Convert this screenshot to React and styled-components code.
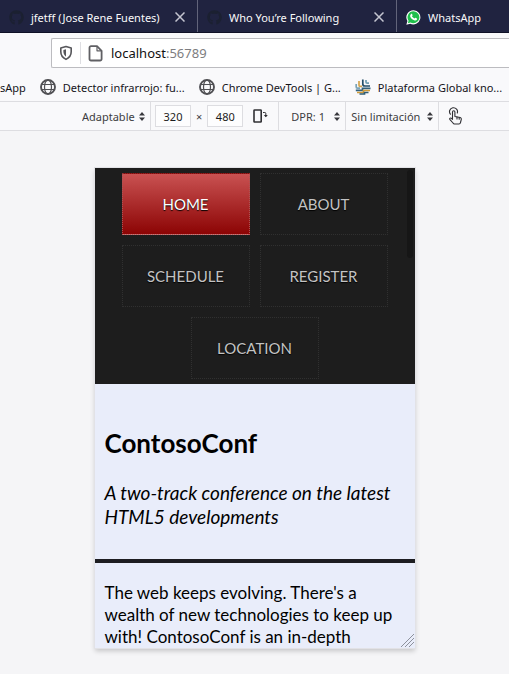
import React from "react";
import styled, { createGlobalStyle, css } from "styled-components";
import { FaGithub } from "react-icons/fa";

const uiFont = `"Noto Sans", "Open Sans", sans-serif`;

const GlobalStyle = createGlobalStyle`
  *, *::before, *::after { box-sizing: border-box; }
  body { margin: 0; background: #f5f5f7; font-family: ${uiFont}; overflow-x: hidden; }
  h1, p { margin: 0; padding: 0; }
  button, input, select { font: inherit; color: inherit; margin: 0; }
`;

const Window = styled.div`
  min-height: 100vh;
  overflow: hidden;
`;

const TabBar = styled.div`
  display: flex;
  height: 33px;
  background: #202340;
  border-bottom: 1px solid #0f1126;
  overflow: hidden;
`;

const Tab = styled.div`
  flex: 0 0 199px;
  min-width: 0;
  display: flex;
  align-items: center;
  gap: 7px;
  padding: 2px 12px 0 9px;
  border-right: 1px solid #62647a;
  color: #f9f9fa;
  font-size: 11px;
  white-space: nowrap;
  &:first-child { flex-basis: 198px; }
`;

const Favicon = styled.span`
  display: flex;
  flex: none;
  justify-content: center;
  width: 15px;
  color: #1b2031;
`;

const TabTitle = styled.span`
  flex: 1;
`;

const CloseButton = styled.button`
  display: flex;
  padding: 0;
  border: 0;
  background: none;
  color: #c4c5d0;
`;

const AddressRow = styled.div`
  display: flex;
  height: 39px;
  padding: 5px 0 4px 51px;
  background: #f9f9fb;
`;

const AddressBox = styled.div`
  flex: 1;
  display: flex;
  align-items: center;
  border: 1px solid #bcbcc0;
  border-right: 0;
  border-radius: 2px 0 0 2px;
  background: #fff;
`;

const ShieldSlot = styled.span`
  display: flex;
  align-items: center;
  width: 29px;
  height: 22px;
  padding-left: 7px;
  border-right: 1px solid #dedee2;
`;

const PageSlot = styled.span`
  display: flex;
  padding: 0 8px 0 7px;
`;

const Address = styled.div`
  font-size: 13px;
  color: #111;
  span { color: #7d7d80; }
`;

const Bookmarks = styled.nav`
  display: flex;
  align-items: center;
  gap: 14px;
  height: 29px;
  padding-top: 1px;
  background: #f9f9fb;
  overflow: hidden;
`;

const Bookmark = styled.a`
  flex: none;
  display: flex;
  align-items: center;
  gap: 7px;
  color: #15141a;
  font-size: 11px;
  white-space: nowrap;
  text-decoration: none;
`;

const DeviceBar = styled.div`
  display: flex;
  align-items: center;
  height: 30px;
  padding-left: 82px;
  border: solid #dddde1;
  border-width: 1px 0;
  background: #f9f9fb;
  color: #3d3d41;
  font-size: 11px;
`;

const cellStyles = {
  device: css`width: 69px;`,
  rotate: css`width: 36px; padding-left: 10px;`,
  dpr: css`width: 67px; padding-left: 12px;`,
  throttle: css`width: 93px; padding-left: 5px;`,
};

const Cell = styled.div`
  display: flex;
  flex: none;
  align-items: center;
  height: 100%;
  border-right: 1px solid #dddde1;
  ${({ $kind }) => cellStyles[$kind]}
`;

const Select = styled.select`
  flex: 1;
  min-width: 0;
  appearance: none;
  padding: 0;
  border: 0;
  background: none;
`;

const Arrows = styled.svg`
  flex: none;
  margin-right: 5px;
`;

const SizeInput = styled.input`
  width: 36px;
  height: 22px;
  padding: 0;
  border: 1px solid #dddde1;
  background: #fdfdfe;
  text-align: center;
  color: #1c1c20;
`;

const Sizes = styled.div`
  display: flex;
  flex: none;
  align-items: center;
  gap: 5px;
  padding-left: 4px;
`;

const IconButton = styled.button`
  display: flex;
  padding: 0;
  border: 0;
  background: none;
  color: #303034;
`;

const TouchButton = styled(IconButton)`
  margin-left: 9px;
`;

const Stage = styled.main`
  display: flex;
  justify-content: center;
  padding: 37px 16px 24px;
`;

const Viewport = styled.section`
  position: relative;
  flex: 0 1 320px;
  height: 480px;
  overflow: hidden;
  background: #e9edfa;
  box-shadow: 0 0 0 1px #e2e2e6, 0 3px 5px rgba(0, 0, 0, 0.2);
  font-family: Lato, "Liberation Sans", sans-serif;
  color: #000;
`;

const SiteNav = styled.nav`
  display: flex;
  flex-wrap: wrap;
  justify-content: center;
  background: #1d1d1d;
`;

const SiteLink = styled.a`
  display: flex;
  align-items: center;
  justify-content: center;
  width: 128px;
  height: 62px;
  margin: 5px;
  border: 1px dotted #303030;
  color: #c3c3c3;
  font-size: 15px;
  text-decoration: none;
  text-shadow: 0 1px 1px #000;
  ${({ $active }) =>
    $active &&
    css`
      border-color: #7d2a2a #a55 #b98080;
      background: linear-gradient(#c95252, #8c0404);
      color: #fff;
    `}
`;

const Thumb = styled.span`
  position: absolute;
  top: 2px;
  right: 2px;
  width: 6px;
  height: 88px;
  border-radius: 3px;
  background: #161616;
`;

const Grip = styled.svg`
  position: absolute;
  right: 1px;
  bottom: 1px;
`;

const Hero = styled.header`
  padding: 41px 10px 30px;
  border-bottom: 4px solid #1d1d21;
`;

const Title = styled.h1`
  margin-bottom: 20px;
  font-size: 26px;
  line-height: 36px;
`;

const Tagline = styled.p`
  font-size: 19px;
  line-height: 24px;
  font-style: italic;
`;

const Intro = styled.p`
  padding: 19px 10px;
  font-size: 17px;
  line-height: 22px;
`;

function CloseIcon() {
  return (
    <svg width="10" height="10" viewBox="0 0 10 10" fill="none" stroke="currentColor" strokeWidth="1.5">
      <path d="M0.5 0.5 9.5 9.5M9.5 0.5 0.5 9.5" />
    </svg>
  );
}

function WhatsAppIcon() {
  return (
    <svg width="17" height="17" viewBox="0 0 17 17">
      <path d="M8.6.2a8.1 8.1 0 0 0-7 12.3L.4 16.7l4.3-1.1A8.1 8.1 0 1 0 8.6.2Z" fill="#fff" />
      <path d="M8.6 1.5a6.8 6.8 0 0 0-5.7 10.6l-.8 2.8 2.9-.7A6.8 6.8 0 1 0 8.6 1.5Z" fill="#1fc04c" />
      <path d="M5.8 4.4c.4-.3.9-.3 1.1.2l.5 1.3c.1.4-.2.7-.6 1.2.7 1.3 1.6 2 2.9 2.5.5-.5.7-1 1.2-.8l1.4.7c.4.2.3.8.1 1.3-.4.9-1.5 1.2-2.4 1-2.9-.7-5-2.9-5.3-4.8-.1-.9.4-2 1.1-2.6Z" fill="#fff" />
    </svg>
  );
}

function ShieldIcon() {
  return (
    <svg width="14" height="16" viewBox="0 0 14 16" fill="none" stroke="#57575b" strokeWidth="1.6">
      <path d="M7 1.6 12.2 3v3.8c0 3.4-1.8 6-5.2 7.6-3.4-1.6-5.2-4.2-5.2-7.6V3Z" strokeLinejoin="round" />
      <path d="M7 4.3V11.7C5.2 10.4 4.4 8.7 4.4 6.6V5Z" fill="#57575b" stroke="none" />
    </svg>
  );
}

function PageIcon() {
  return (
    <svg width="15" height="17" viewBox="0 0 15 17" fill="none" stroke="#606064" strokeWidth="1.8" strokeLinejoin="round">
      <path d="M3 1.2H9L13.6 5.8V14a1.5 1.5 0 0 1-1.5 1.5H3A1.5 1.5 0 0 1 1.5 14V2.7A1.5 1.5 0 0 1 3 1.2Z" />
      <path d="M9 1.5V5.8H13.5" strokeWidth="1.2" />
    </svg>
  );
}

function GlobeIcon() {
  return (
    <svg width="16" height="16" viewBox="0 0 16 16" fill="none" stroke="#505054" strokeWidth="1.2">
      <circle cx="8" cy="8" r="7" strokeWidth="1.9" />
      <ellipse cx="8" cy="8" rx="3.5" ry="7" />
      <path d="M1.5 5.5H14.5M1.5 10.5H14.5" />
    </svg>
  );
}

function PlatformIcon() {
  return (
    <svg width="16" height="16" viewBox="0 0 16 16" fill="none" strokeWidth="1.7">
      <path d="M1.2 5v3q0 1.2 1.2 1.2H5" stroke="#7ba3b5" />
      <path d="M4 2V6.2q0 1.2 1.2 1.2H7" stroke="#d5a44a" />
      <path d="M7.8 .5V5q0 2 2 2H15" stroke="#234f69" />
      <path d="M11 1V3q0 1.2 1.2 1.2H14" stroke="#6d9db1" />
      <path d="M.8 11.3H7.5V9.3H15.5" stroke="#31617c" />
      <path d="M2 13.5H8.5V11.5H15" stroke="#d09b3a" />
      <path d="M4.5 15H9.5V13.5H13.5" stroke="#305d75" />
    </svg>
  );
}

function UpDown() {
  return (
    <Arrows width="6" height="9" viewBox="0 0 6 9" fill="#38383d">
      <path d="M3 0 6 3.5H0ZM3 9 0 5.5H6Z" />
    </Arrows>
  );
}

function RotateIcon() {
  return (
    <svg width="16" height="16" viewBox="0 0 16 16" fill="none" stroke="currentColor" strokeWidth="1.6">
      <rect x="1" y="2" width="7.2" height="12" rx="0.6" />
      <path d="M10 4.5H11.8Q12.8 4.5 12.8 5.5V8.500" strokeWidth="1" />
      <path d="M10.8 7H14.8L12.8 9.300Z" fill="currentColor" stroke="none" />
    </svg>
  );
}

function TouchIcon() {
  return (
    <svg width="15" height="18" viewBox="0 0 15 18" fill="none" stroke="currentColor" strokeWidth="1.1" strokeLinecap="round" strokeLinejoin="round">
      <path d="M2.4 7.2A4 4 0 1 1 9.3 6" />
      <path d="M4.5 11.5V5a1.2 1.2 0 0 1 2.4 0V9.5L12.2 10.5Q13.6 10.9 13.3 12.3L12.5 15.5Q12.2 17 11 17H6.5Q5.5 17 5 16L2 12.7Q1.2 11.7 2.1 11.1 2.9 10.6 4.5 12.3" />
      <path d="M9 10V12M11.2 10.5V12.2" />
    </svg>
  );
}

const tabs = [
  { title: "jfetff (Jose Rene Fuentes)", icon: <FaGithub size={15} />, closable: true },
  { title: "Who You’re Following", icon: <FaGithub size={15} />, closable: true },
  { title: "WhatsApp", icon: <WhatsAppIcon /> },
];

const bookmarks = [
  { title: "sApp" },
  { title: "Detector infrarrojo: fu...", icon: <GlobeIcon /> },
  { title: "Chrome DevTools | G...", icon: <GlobeIcon /> },
  { title: "Plataforma Global kno...", icon: <PlatformIcon /> },
];

const links = ["HOME", "ABOUT", "SCHEDULE", "REGISTER", "LOCATION"];

export default function App() {
  return (
    <Window>
      <GlobalStyle />
      <TabBar>
        {tabs.map((tab) => (
          <Tab key={tab.title}>
            <Favicon>{tab.icon}</Favicon>
            <TabTitle>{tab.title}</TabTitle>
            {tab.closable && (
              <CloseButton aria-label={`Cerrar ${tab.title}`}>
                <CloseIcon />
              </CloseButton>
            )}
          </Tab>
        ))}
      </TabBar>
      <AddressRow>
        <AddressBox>
          <ShieldSlot><ShieldIcon /></ShieldSlot>
          <PageSlot><PageIcon /></PageSlot>
          <Address>localhost<span>:56789</span></Address>
        </AddressBox>
      </AddressRow>
      <Bookmarks>
        {bookmarks.map((item) => (
          <Bookmark key={item.title} href="#">
            {item.icon}
            {item.title}
          </Bookmark>
        ))}
      </Bookmarks>
      <DeviceBar>
        <Cell $kind="device">
          <Select aria-label="Dispositivo"><option>Adaptable</option></Select>
          <UpDown />
        </Cell>
        <Sizes>
          <SizeInput aria-label="Ancho" defaultValue="320" />
          <span>×</span>
          <SizeInput aria-label="Alto" defaultValue="480" />
        </Sizes>
        <Cell $kind="rotate">
          <IconButton aria-label="Rotar"><RotateIcon /></IconButton>
        </Cell>
        <Cell $kind="dpr">
          <Select aria-label="DPR"><option>DPR: 1</option></Select>
          <UpDown />
        </Cell>
        <Cell $kind="throttle">
          <Select aria-label="Limitación"><option>Sin limitación</option></Select>
          <UpDown />
        </Cell>
        <TouchButton aria-label="Simulación táctil"><TouchIcon /></TouchButton>
      </DeviceBar>
      <Stage>
        <Viewport>
          <SiteNav>
            {links.map((label, index) => (
              <SiteLink key={label} href="#" $active={index === 0}>{label}</SiteLink>
            ))}
          </SiteNav>
          <Hero>
            <Title>ContosoConf</Title>
            <Tagline>A two-track conference on the latest HTML5 developments</Tagline>
          </Hero>
          <Intro>
            The web keeps evolving. There's a wealth of new technologies to keep up with! ContosoConf is an in-depth
          </Intro>
          <Thumb />
          <Grip width="13" height="13" viewBox="0 0 13 13" fill="none" stroke="#8d919c" strokeWidth="1">
            <path d="M0 13 13 0M4 13 13 4M8 13 13 8" />
          </Grip>
        </Viewport>
      </Stage>
    </Window>
  );
}
